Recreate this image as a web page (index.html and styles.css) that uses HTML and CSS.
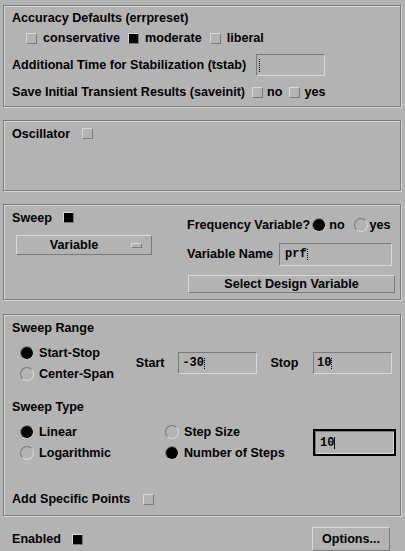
FILE: index.html
```html
<!DOCTYPE html>
<html>
<head>
<meta charset="utf-8">
<link rel="stylesheet" href="styles.css">
</head>
<body>
<div class="page">
  <section class="frame f1">
    <div class="row title-row">Accuracy Defaults (errpreset)</div>
    <div class="row check-row">
      <span class="cb"></span><span class="lbl">conservative</span>
      <span class="cb on"></span><span class="lbl">moderate</span>
      <span class="cb"></span><span class="lbl">liberal</span>
    </div>
    <div class="row tstab-row">
      <span>Additional Time for Stabilization (tstab)</span>
      <span class="field tstab"><span class="caret dotted"></span></span>
    </div>
    <div class="row save-row">
      <span>Save Initial Transient Results (saveinit)</span>
      <span class="cb"></span><span class="lbl">no</span>
      <span class="cb"></span><span class="lbl">yes</span>
    </div>
  </section>

  <section class="frame f2">
    <div class="row osc-row"><span>Oscillator</span><span class="cb"></span></div>
  </section>

  <section class="frame f3">
    <div class="col left">
      <div class="row sweep-row"><span>Sweep</span><span class="cb on"></span></div>
      <div class="button option">Variable<span class="indicator"></span></div>
    </div>
    <div class="col right">
      <div class="row freq-row">
        <span>Frequency Variable?</span>
        <span class="radio on r-no"></span><span class="lbl l-no">no</span>
        <span class="radio r-yes"></span><span class="lbl l-yes">yes</span>
      </div>
      <div class="row varname-row">
        <span>Variable Name</span>
        <span class="field varname">prf<span class="caret dotted"></span></span>
      </div>
      <div class="button select">Select Design Variable</div>
    </div>
  </section>

  <section class="frame f4">
    <div class="row head">Sweep Range</div>
    <div class="range">
      <div class="radios">
        <div class="row opt"><span class="radio on"></span><span class="lbl">Start-Stop</span></div>
        <div class="row opt"><span class="radio"></span><span class="lbl">Center-Span</span></div>
      </div>
      <span class="start-lbl">Start</span>
      <span class="field num">-30<span class="caret dotted"></span></span>
      <span class="stop-lbl">Stop</span>
      <span class="field num">10<span class="caret dotted"></span></span>
    </div>
    <div class="row head type-head">Sweep Type</div>
    <div class="type">
      <div class="row opt"><span class="radio on"></span><span class="lbl">Linear</span></div>
      <div class="row opt"><span class="radio"></span><span class="lbl">Step Size</span></div>
      <div class="steps-cell"><span class="field steps">10<span class="caret solid"></span></span></div>
      <div class="row opt"><span class="radio"></span><span class="lbl">Logarithmic</span></div>
      <div class="row opt"><span class="radio on"></span><span class="lbl">Number of Steps</span></div>
    </div>
    <div class="row add-row"><span>Add Specific Points</span><span class="cb"></span></div>
  </section>

  <footer class="row footer">
    <span>Enabled</span><span class="cb on"></span>
    <div class="button options">Options...</div>
  </footer>
</div>
</body>
</html>
```

FILE: styles.css
```css
html, body {
  margin: 0;
  padding: 0;
  background: #b3b3b3;
}
body {
  font-family: "Liberation Sans", Arial, sans-serif;
  font-weight: bold;
  font-size: 12.6px;
  color: #000;
  width: 405px;
  height: 551px;
  overflow: hidden;
}
.page {
  padding-top: 5px;
}
.frame {
  margin: 0 4px 0 3px;
  border: 1px solid #7c7c7c;
  box-shadow: inset 1px 1px 0 #d6d6d6, 1px 1px 0 #d6d6d6;
  padding: 0 8px;
  box-sizing: border-box;
}
.row {
  display: flex;
  align-items: center;
  white-space: nowrap;
}
.cb {
  width: 11px;
  height: 11px;
  box-sizing: border-box;
  border: 1px solid;
  border-color: #d8d8d8 #7a7a7a #7a7a7a #d8d8d8;
  background: #b3b3b3;
  flex: none;
}
.cb.on {
  background: #000;
}
.radio {
  width: 14px;
  height: 14px;
  box-sizing: border-box;
  border-radius: 50%;
  border: 1px solid;
  border-color: #7a7a7a #d8d8d8 #d8d8d8 #7a7a7a;
  flex: none;
}
.radio.on {
  background: #000;
  border-color: #8a8a8a #c8c8c8 #c8c8c8 #8a8a8a;
}
.field {
  display: inline-flex;
  align-items: center;
  box-sizing: border-box;
  border: 1px solid;
  border-color: #7a7a7a #d8d8d8 #d8d8d8 #7a7a7a;
  font-family: "Liberation Mono", "Courier New", monospace;
  font-weight: bold;
  font-size: 12px;
  padding-left: 4px;
  flex: none;
}
.caret {
  display: inline-block;
  width: 1px;
  height: 11px;
}
.caret.dotted {
  border-left: 1px dotted #000;
}
.caret.solid {
  border-left: 1px solid #000;
  height: 12px;
}
.button {
  box-sizing: border-box;
  border: 1px solid;
  border-color: #d8d8d8 #7a7a7a #7a7a7a #d8d8d8;
  display: flex;
  align-items: center;
  justify-content: center;
  white-space: nowrap;
}

/* Frame 1 */
.f1 { height: 102px; }
.title-row { height: 24px; }
.check-row { height: 16px; padding-left: 14px; }
.check-row .lbl { margin-left: 6px; margin-right: 8px; }
.tstab-row { height: 22px; margin-top: 8px; }
.tstab { width: 69px; height: 22px; margin-left: 10px; padding-left: 2px; }
.tstab .caret { height: 13px; }
.save-row { height: 24px; margin-top: 4px; }
.save-row .cb { margin-left: 7px; }
.save-row .lbl { margin-left: 4px; }

/* Frame 2 */
.f2 { height: 71px; margin-top: 13px; }
.osc-row { height: 25px; }
.osc-row .cb { margin-left: 12px; }

/* Frame 3 */
.f3 {
  margin-top: 13px;
  height: 96px;
  display: flex;
  padding-right: 0;
}
.f3 .left { width: 175px; flex: none; }
.sweep-row { height: 26px; }
.sweep-row .cb { margin-left: 11px; margin-top: -2px; }
.option {
  margin-left: 4px;
  margin-top: 4px;
  width: 136px;
  height: 20px;
  position: relative;
  padding-right: 20px;
}
.indicator {
  position: absolute;
  right: 9px;
  top: 7px;
  width: 11px;
  height: 5px;
  box-sizing: border-box;
  border: 1px solid;
  border-color: #d8d8d8 #7a7a7a #7a7a7a #d8d8d8;
}
.f3 .right { width: 208px; flex: none; }
.freq-row { height: 20px; margin-top: 10px; }
.r-no { margin-left: 2px; }
.l-no { margin-left: 3px; margin-right: 9px; }
.l-yes { margin-left: 2px; }
.varname-row { height: 22px; margin-top: 8px; }
.varname { width: 113px; height: 23px; margin-left: 6px; padding-left: 5px; }
.select { margin-top: 10px; margin-left: 1px; width: 207px; height: 18px; }

/* Frame 4 */
.f4 { margin-top: 14px; height: 202px; }
.head { height: 26px; }
.range {
  display: flex;
  align-items: center;
  margin-top: 1px;
  height: 42px;
}
.radios { width: 125px; padding-left: 8px; box-sizing: border-box; }
.opt { height: 21px; }
.opt .lbl { margin-left: 5px; }
.start-lbl { width: 43px; }
.stop-lbl { width: 43px; margin-left: 13px; }
.num { width: 79px; height: 22px; padding-left: 3px; }
.type-head { height: 22px; margin-top: 12px; }
.type {
  display: grid;
  grid-template-columns: 145px 148px 1fr;
  grid-template-rows: 21px 21px;
  margin-top: 3px;
  padding-left: 8px;
}
.steps-cell {
  grid-row: 1 / span 2;
  grid-column: 3;
  padding-top: 8px;
}
.steps {
  width: 83px;
  height: 27px;
  border: 2px solid #000;
  box-shadow: inset 1px 1px 0 #7a7a7a, inset -1px -1px 0 #d8d8d8;
  padding-left: 5px;
}
.add-row { height: 22px; margin-top: 25px; }
.add-row .cb { margin-left: 13px; }

/* Footer */
.footer {
  margin-top: 11px;
  height: 24px;
  padding-left: 12px;
}
.footer .cb { margin-left: 11px; }
.options {
  margin-left: auto;
  margin-right: 15px;
  width: 78px;
  height: 24px;
}
```
